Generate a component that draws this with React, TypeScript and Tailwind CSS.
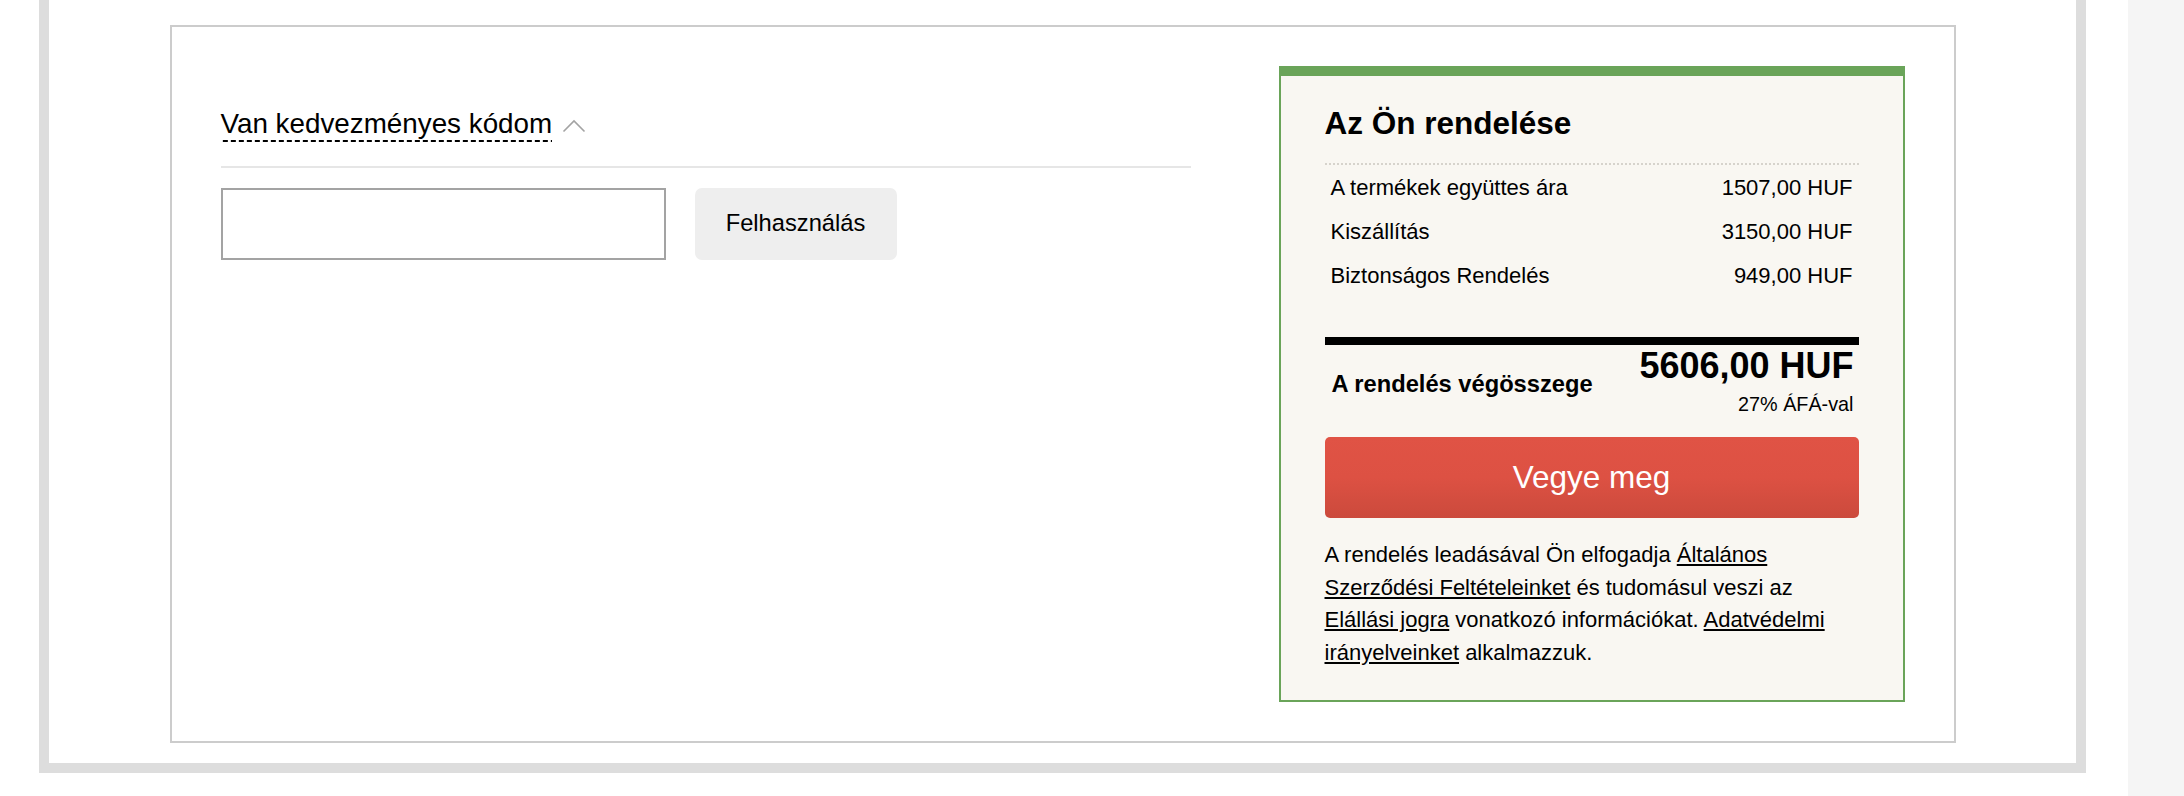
import React from "react";

const rows = [
  { label: "A termékek együttes ára", value: "1507,00 HUF" },
  { label: "Kiszállítás", value: "3150,00 HUF" },
  { label: "Biztonságos Rendelés", value: "949,00 HUF" },
];

function ChevronUp() {
  return (
    <svg width="24" height="14" viewBox="0 0 24 14" fill="none" className="ml-[10px] mt-[2px]">
      <polyline points="1.5,12.5 12,2 22.5,12.5" stroke="#a3a3a3" strokeWidth="1.6" />
    </svg>
  );
}

function CouponForm() {
  return (
    <div className="w-[970px] shrink-0">
      {/* toggle */}
      <div className="mt-[42px] flex items-center">
        <span className="pb-[2px] text-[27.8px] leading-[32px] text-black bg-[linear-gradient(to_right,black_5px,transparent_5px)] bg-[length:8px_2px] bg-repeat-x bg-bottom">
          Van kedvezményes kódom
        </span>
        <ChevronUp />
      </div>

      <div className="mt-[24px] h-[2px] bg-[#e6e6e6]" />

      <div className="mt-[20px] flex gap-[29px]">
        <input type="text" className="w-[445px] h-[72px] border-2 border-[#a3a3a3] bg-white outline-none px-3 text-[22px]" />
        <button className="w-[202px] h-[72px] rounded-[7px] bg-[#eeeeee] text-[23.7px] text-black">
          Felhasználás
        </button>
      </div>
    </div>
  );
}

function OrderSummary() {
  return (
    <div className="w-[626px] shrink-0 border-x-2 border-b-2 border-t-[10px] border-[#6aa459] bg-[#f9f7f2] px-[44px] pt-[29px] pb-[31px]">
      <h2 className="text-[31.5px] leading-[36px] font-bold text-black">Az Ön rendelése</h2>

      <div className="mt-[22px] border-t-2 border-dotted border-[#d6d3cc]" />

      <div className="flex flex-col">
        {rows.map((r) => (
          <div key={r.label} className="h-[44px] flex items-center justify-between px-[6px] text-[22px] text-black">
            <span>{r.label}</span>
            <span>{r.value}</span>
          </div>
        ))}
      </div>

      <div className="mt-[40px] h-[8px] bg-black" />

      <div className="flex justify-between pl-[7px] pr-[5px]">
        <div className="pt-[26px] text-[23.7px] leading-[27px] font-bold text-black">A rendelés végösszege</div>
        <div className="flex flex-col items-end">
          <div className="text-[36px] leading-[41px] font-bold text-black">5606,00 HUF</div>
          <div className="mt-[7px] text-[19.8px] leading-[22px] text-black">27% ÁFÁ-val</div>
        </div>
      </div>

      <button className="mt-[22px] w-full h-[81px] rounded-[5px] bg-linear-to-b from-[#e05345] via-[#dd5143] to-[#cb4a3c] text-white text-[31.5px]">
        Vegye meg
      </button>

      <p className="mt-[21px] text-[22px] leading-[32.5px] text-black">
        A rendelés leadásával Ön elfogadja <a className="underline">Általános</a>{" "}
        <a className="underline">Szerződési Feltételeinket</a> és tudomásul veszi az{" "}
        <a className="underline">Elállási jogra</a> vonatkozó információkat. <a className="underline">Adatvédelmi</a>{" "}
        <a className="underline">irányelveinket</a> alkalmazzuk.
      </p>
    </div>
  );
}

export default function App() {
  return (
    <div className="w-[2184px] h-[796px] flex bg-white font-['Liberation_Sans',Arial,Helvetica,sans-serif]">
      <div className="w-[39px] shrink-0" />

      {/* page frame */}
      <div className="w-[2047px] h-[773px] shrink-0 border-x-[10px] border-b-[10px] border-[#dddddd] pt-[25px]">
        <div className="w-[1786px] h-[718px] mx-auto border-2 border-[#cccccc] flex items-start gap-[88px] pl-[49px] pt-[39px]">
          <CouponForm />
          <OrderSummary />
        </div>
      </div>

      <div className="w-[42px] shrink-0" />
      <div className="flex-1 bg-[#f5f5f5]" />
    </div>
  );
}
